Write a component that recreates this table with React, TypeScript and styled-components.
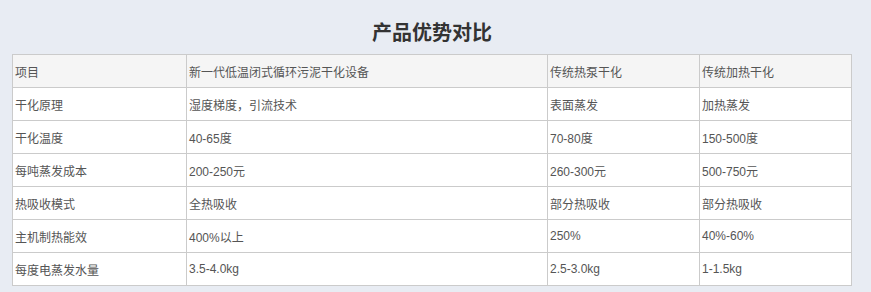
import styled, { createGlobalStyle } from "styled-components";

const GlobalStyle = createGlobalStyle`
  html, body {
    margin: 0;
    padding: 0;
    background: #e8ecf3;
  }
  body {
    font-family: "Liberation Sans", "Noto Sans CJK SC", sans-serif;
  }
`;

const Page = styled.div`
  width: 871px;
  height: 292px;
  padding: 0 0 0 12px;
  box-sizing: border-box;
  overflow: hidden;
`;

const Title = styled.h2`
  width: 840px;
  margin: 0;
  padding-top: 19px;
  height: 54px;
  box-sizing: border-box;
  text-align: center;
  font-size: 20px;
  line-height: 28px;
  font-weight: bold;
  color: #333;
`;

const Table = styled.table`
  width: 840px;
  border-collapse: collapse;
  table-layout: fixed;
  background: #fff;
`;

const Col = styled.col<{ $w: number }>`
  width: ${(p) => p.$w}px;
`;

const Row = styled.tr<{ $head?: boolean }>`
  background: ${(p) => (p.$head ? "#f5f5f5" : "#fff")};
`;

const Cell = styled.td`
  border: 1px solid #cbcbcb;
  height: 32px;
  padding: 0 0 0 2px;
  font-size: 12px;
  color: #555;
  vertical-align: middle;
  white-space: nowrap;
`;

const widths = [174, 361, 152, 152];

const rows = [
  ["项目", "新一代低温闭式循环污泥干化设备", "传统热泵干化", "传统加热干化"],
  ["干化原理", "湿度梯度，引流技术", "表面蒸发", "加热蒸发"],
  ["干化温度", "40-65度", "70-80度", "150-500度"],
  ["每吨蒸发成本", "200-250元", "260-300元", "500-750元"],
  ["热吸收模式", "全热吸收", "部分热吸收", "部分热吸收"],
  ["主机制热能效", "400%以上", "250%", "40%-60%"],
  ["每度电蒸发水量", "3.5-4.0kg", "2.5-3.0kg", "1-1.5kg"],
];

export default function App() {
  return (
    <Page>
      <GlobalStyle />
      <Title>产品优势对比</Title>
      <Table>
        <colgroup>
          {widths.map((w, i) => (
            <Col key={i} $w={w} />
          ))}
        </colgroup>
        <tbody>
          {rows.map((r, i) => (
            <Row key={i} $head={i === 0}>
              {r.map((c, j) => (
                <Cell key={j}>{c}</Cell>
              ))}
            </Row>
          ))}
        </tbody>
      </Table>
    </Page>
  );
}
